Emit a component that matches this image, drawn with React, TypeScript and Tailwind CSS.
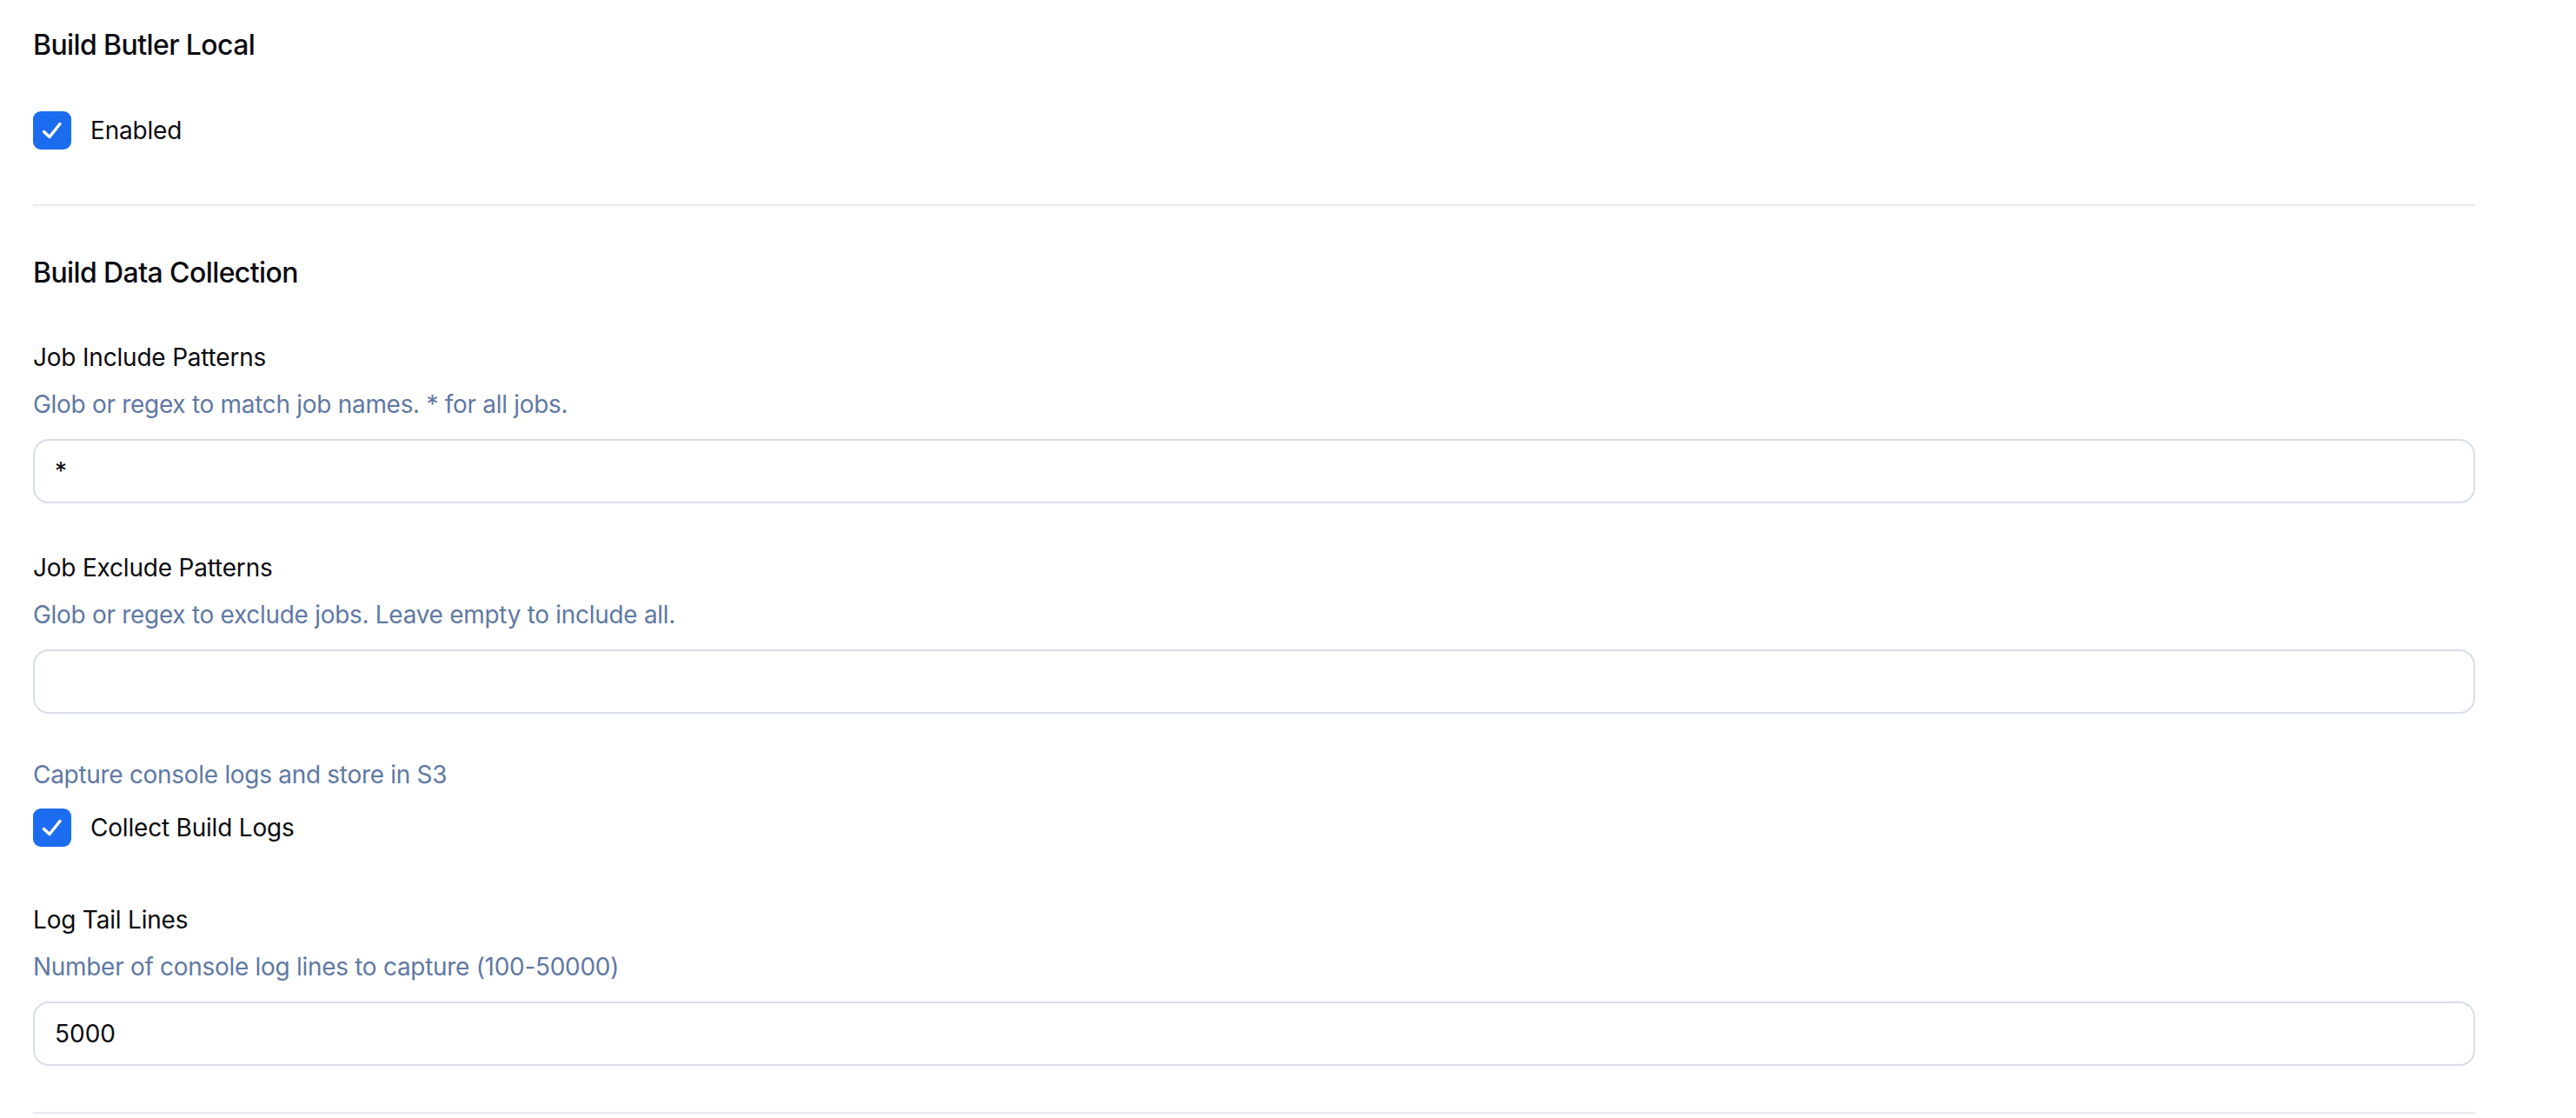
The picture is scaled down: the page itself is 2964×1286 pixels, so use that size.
import React from 'react';

const FONT = "font-['Inter','Noto_Sans','Liberation_Sans',sans-serif]";

const CheckMark = () => (
  <svg viewBox="0 0 44 44" className="h-[44px] w-[44px]" fill="none">
    <polyline
      points="12.5,23.5 19,29.5 31,14.5"
      stroke="white"
      strokeWidth="3.5"
      strokeLinecap="round"
      strokeLinejoin="round"
    />
  </svg>
);

const CheckRow: React.FC<{ label: string; className?: string }> = ({ label, className = '' }) => (
  <label className={`flex h-[44px] items-center gap-[22px] ${className}`}>
    <span className="flex h-[44px] w-[44px] shrink-0 items-center justify-center rounded-[9px] bg-[#1c6cf0]">
      <CheckMark />
    </span>
    <span className="text-[28px] leading-[44px] tracking-[-0.2px] text-[#0b0b10]">{label}</span>
  </label>
);

const TextField: React.FC<{
  label: string;
  hint: string;
  value: string;
  className?: string;
}> = ({ label, hint, value, className = '' }) => (
  <div className={className}>
    <div className="text-[28px] leading-[36px] tracking-[-0.2px] text-[#0b0b10]">{label}</div>
    <div className="mt-[18px] text-[28px] leading-[36px] tracking-[-0.3px] text-[#6079a3]">{hint}</div>
    <input
      readOnly
      value={value}
      className="mt-[22px] box-border block h-[74px] w-full rounded-[18px] border-2 border-[#d6dde8] bg-white px-[23px] text-[28px] text-[#0b0b10] outline-none"
    />
  </div>
);

export default function App() {
  return (
    <div className={`min-h-screen bg-white ${FONT}`}>
      <div className="ml-[38px] w-[2810px] pt-[32px] pb-[4px]">
        <h2 className="text-[32px] leading-[40px] font-medium tracking-[-0.6px] text-[#0b0b10]">
          Build Butler Local
        </h2>
        <CheckRow label="Enabled" className="mt-[56px]" />

        <div className="mt-[63px] h-[2px] bg-[#e6e9ef]" />

        <h2 className="mt-[57px] text-[32px] leading-[40px] font-medium tracking-[-0.6px] text-[#0b0b10]">
          Build Data Collection
        </h2>

        <TextField
          className="mt-[59px]"
          label="Job Include Patterns"
          hint="Glob or regex to match job names. * for all jobs."
          value="*"
        />

        <TextField
          className="mt-[56px]"
          label="Job Exclude Patterns"
          hint="Glob or regex to exclude jobs. Leave empty to include all."
          value=""
        />

        <div className="mt-[52px] text-[28px] leading-[36px] tracking-[-0.3px] text-[#6079a3]">
          Capture console logs and store in S3
        </div>
        <CheckRow label="Collect Build Logs" className="mt-[21px]" />

        <TextField
          className="mt-[66px]"
          label="Log Tail Lines"
          hint="Number of console log lines to capture (100-50000)"
          value="5000"
        />

        <div className="mt-[53px] h-[2px] bg-[#e6e9ef]" />
      </div>
    </div>
  );
}
